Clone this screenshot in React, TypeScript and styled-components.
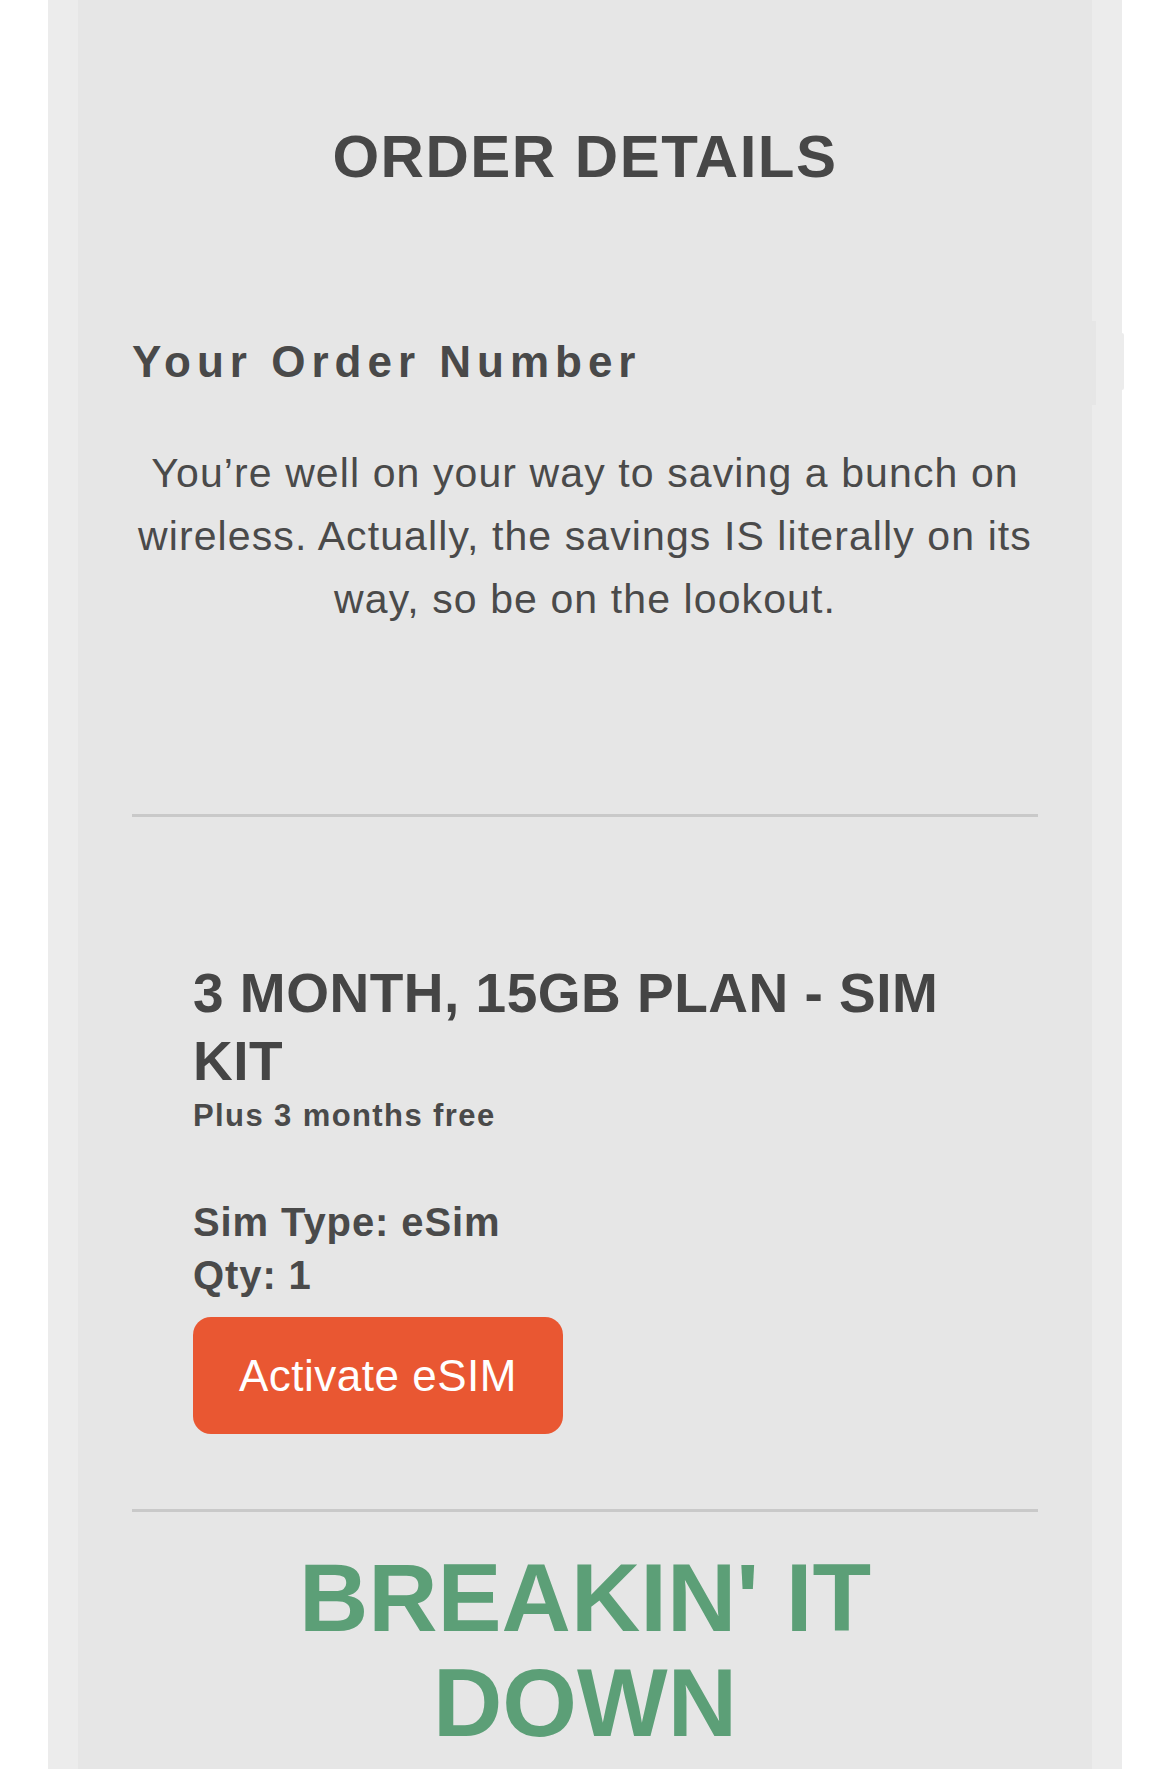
import styled, { createGlobalStyle } from 'styled-components'

const GlobalStyle = createGlobalStyle`
  html, body {
    margin: 0;
    padding: 0;
    background: #ffffff;
  }
  body {
    font-family: "Liberation Sans", Arial, Helvetica, sans-serif;
    color: #4a4a4a;
  }
`

const Frame = styled.div`
  width: 1074px;
  margin-left: 48px;
  padding: 0 30px;
  box-sizing: border-box;
  background: #ececec;
`

const Panel = styled.main`
  position: relative;
  background: #e6e6e6;
  padding: 121px 54px 120px;
`

const PageTitle = styled.h1`
  margin: 0;
  text-align: center;
  font-size: 60px;
  line-height: 72px;
  font-weight: 700;
  letter-spacing: 1.5px;
  color: #474747;
`

const SectionTitle = styled.h2`
  position: relative;
  margin: 142px 0 0;
  font-size: 44px;
  line-height: 53px;
  font-weight: 700;
  letter-spacing: 6px;
  color: #494949;
`

// the order number row bleeds a few pixels past the panel edge
const Overflow = styled.span`
  position: absolute;
  top: -14px;
  right: -58px;
  width: 4px;
  height: 84px;
  background: #e6e6e6;

  &::after {
    content: '';
    position: absolute;
    top: 12px;
    left: 30px;
    width: 2px;
    height: 57px;
    border-radius: 0 2px 2px 0;
    background: #ececec;
  }
`

const Intro = styled.p`
  margin: 54px 0 0;
  text-align: center;
  font-size: 41px;
  line-height: 63px;
  letter-spacing: 1.1px;
  color: #4a4a4a;
`

const Divider = styled.hr<{ $gap: number }>`
  margin: ${(p) => p.$gap}px 0 0;
  border: 0;
  height: 3px;
  background: #c9c9c9;
`

const Product = styled.section`
  display: flex;
  flex-direction: column;
  align-items: flex-start;
  padding: 142px 61px 0;
`

const ProductName = styled.h3`
  margin: 0;
  font-size: 55px;
  line-height: 68px;
  font-weight: 700;
  letter-spacing: 0.5px;
  color: #454545;
`

const Promo = styled.div`
  margin-top: 3px;
  font-size: 31px;
  line-height: 36px;
  font-weight: 700;
  letter-spacing: 1.4px;
`

const Specs = styled.div`
  margin-top: 62px;
  font-size: 40px;
  line-height: 53px;
  font-weight: 700;
  letter-spacing: 0.9px;
`

const ActivateButton = styled.button`
  margin-top: 15px;
  height: 117px;
  padding: 0 46px;
  border: 0;
  border-radius: 18px;
  background: #e95732;
  color: #ffffff;
  font-family: inherit;
  font-size: 44px;
  letter-spacing: 0.5px;
  cursor: pointer;
`

const Breakdown = styled.h2`
  margin: 33px auto 0;
  max-width: 640px;
  text-align: center;
  font-size: 96px;
  line-height: 105px;
  font-weight: 700;
  color: #5c9f77;
`

function App() {
  return (
    <>
      <GlobalStyle />
      <Frame>
        <Panel>
          <PageTitle>ORDER DETAILS</PageTitle>
          <SectionTitle>
            Your Order Number
            <Overflow />
          </SectionTitle>
          <Intro>
            You’re well on your way to saving a bunch on wireless. Actually, the savings IS
            literally on its way, so be on the lookout.
          </Intro>
          <Divider $gap={183} />
          <Product>
            <ProductName>3 MONTH, 15GB PLAN - SIM KIT</ProductName>
            <Promo>Plus 3 months free</Promo>
            <Specs>
              <div>Sim Type: eSim</div>
              <div>Qty: 1</div>
            </Specs>
            <ActivateButton>Activate eSIM</ActivateButton>
          </Product>
          <Divider $gap={75} />
          <Breakdown>BREAKIN' IT DOWN</Breakdown>
        </Panel>
      </Frame>
    </>
  )
}

export default App
